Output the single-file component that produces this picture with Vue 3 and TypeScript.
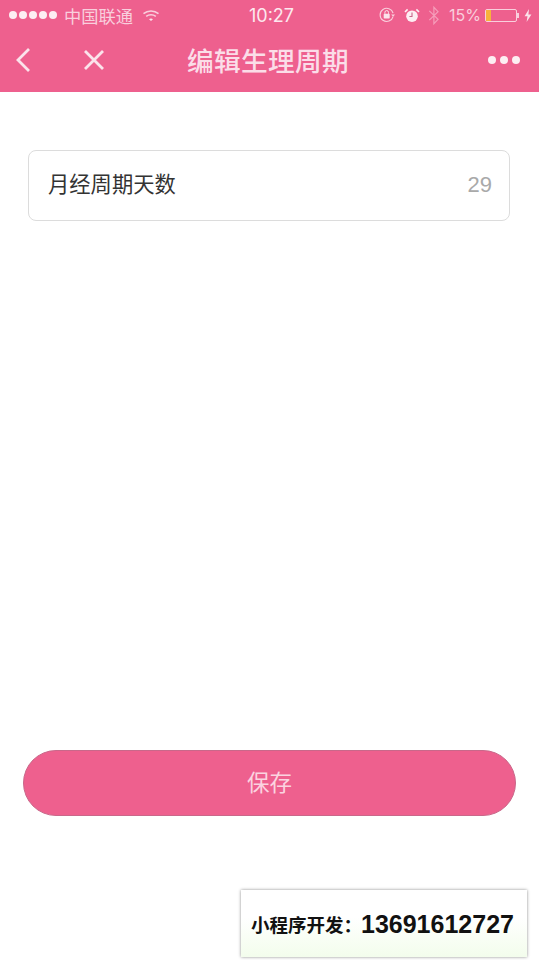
<script setup lang="ts">
const title: string = '编辑生理周期'
const dots: number[] = [1, 2, 3, 4, 5]
</script>

<template>
  <div class="page">
    <header class="header">
      <div class="status">
        <div class="status-left">
          <div class="signal"><span v-for="d in dots" :key="d" class="sig-dot"></span></div>
          <span class="carrier">中国联通</span>
          <svg class="wifi" width="18" height="13" viewBox="0 0 18 13" fill="none">
            <path d="M1.5 4.6C5.8 1 12.2 1 16.5 4.6" stroke="#f9cfdd" stroke-width="1.5" />
            <path d="M4.2 7.4C6.9 5.2 11.1 5.2 13.8 7.4" stroke="#f9cfdd" stroke-width="1.5" />
            <path d="M7 10.2 9 12l2-1.8C9.8 9.2 8.2 9.2 7 10.2Z" fill="#fbe3eb" />
          </svg>
        </div>
        <span class="time">10:27</span>
        <div class="status-right">
          <svg class="lock" width="18" height="16" viewBox="0 0 17 16" fill="none">
            <path d="M14.6 9.6A6.6 6.6 0 1 1 14.6 6.2" stroke="#f9cfdd" stroke-width="1.1" />
            <path d="M12.6 7.4h4l-2 2.4Z" fill="#f9cfdd" />
            <rect x="5.2" y="6.8" width="6" height="4.6" rx=".6" fill="#fbe3eb" />
            <path d="M6.4 6.8V5.4a1.8 1.8 0 0 1 3.6 0v1.4" stroke="#fbe3eb" stroke-width="1" />
          </svg>
          <svg class="alarm" width="16" height="15" viewBox="0 0 16 15" fill="none">
            <circle cx="8" cy="8.2" r="5.8" fill="#fdeef3" />
            <path d="M8 4.6v3.9H5.4" stroke="#c9658a" stroke-width="1.1" />
            <path d="M1 4 3.6 1.4M15 4 12.4 1.4" stroke="#fdeef3" stroke-width="1.6" />
          </svg>
          <svg class="bt" width="12" height="21" viewBox="0 0 11 19" fill="none">
            <path d="M1.2 5.2 9.2 13 5.4 17V2l3.8 4-8 7.8" stroke="#f59dba" stroke-width="1.1" />
          </svg>
          <span class="percent">15%</span>
          <div class="battery">
            <div class="battery-body"><span class="battery-level"></span></div>
            <span class="battery-tip"></span>
          </div>
          <svg class="bolt" width="8" height="13" viewBox="0 0 8 13">
            <path d="M5 0 .6 7.2h2.9L2.6 13 7.4 5.4H4.4Z" fill="#fbe3eb" />
          </svg>
        </div>
      </div>
      <nav class="nav">
        <div class="nav-left">
          <svg class="back" width="16" height="26" viewBox="0 0 16 26" fill="none">
            <path d="M14 2 3 13l11 11" stroke="#fbe3eb" stroke-width="2.8" />
          </svg>
          <svg class="close" width="24" height="24" viewBox="0 0 24 24" fill="none">
            <path d="M3 3l18 18M21 3 3 21" stroke="#fbe3eb" stroke-width="2.8" />
          </svg>
        </div>
        <h1 class="title">{{ title }}</h1>
        <div class="more"><span></span><span></span><span></span></div>
      </nav>
    </header>

    <main class="main">
      <div class="card">
        <span class="label">月经周期天数</span>
        <span class="value">29</span>
      </div>
      <button class="save" type="button">保存</button>
    </main>

    <aside class="promo">
      <span class="promo-label">小程序开发：</span><span class="promo-phone">13691612727</span>
    </aside>
  </div>
</template>

<style scoped>
.page {
  position: relative;
  width: 539px;
  height: 960px;
  display: flex;
  flex-direction: column;
  overflow: hidden;
  background: #fff;
  font-family: "Liberation Sans", "Noto Sans CJK SC", sans-serif;
}
.header {
  height: 92px;
  flex: none;
  background: #ee608e;
  display: flex;
  flex-direction: column;
}
.status {
  height: 30px;
  display: grid;
  grid-template-columns: 1fr auto 1fr;
  align-items: center;
  padding: 0 7px 0 9px;
  color: #fbdce7;
  font-size: 16px;
}
.status-left,
.status-right {
  display: flex;
  align-items: center;
}
.status-right {
  justify-content: flex-end;
}
.signal {
  display: flex;
  gap: 2px;
}
.sig-dot {
  width: 8px;
  height: 8px;
  border-radius: 50%;
  background: #fdeef3;
}
.carrier {
  margin-left: 7px;
  color: #f9cfdd;
  font-size: 17.25px;
}
.wifi {
  margin-left: 9px;
}
.time {
  font-family: "Inter", "Liberation Sans", sans-serif;
  font-size: 18px;
  color: #fde8ef;
  padding-left: 2px;
}
.alarm {
  margin-left: 8px;
}
.bt {
  margin-left: 8px;
}
.percent {
  margin-left: 9px;
  font-family: "Inter", "Liberation Sans", sans-serif;
  font-size: 16px;
  color: #f9cfdd;
}
.battery {
  margin-left: 4px;
  display: flex;
  align-items: center;
}
.battery-body {
  width: 32px;
  height: 13px;
  box-sizing: border-box;
  border: 1px solid #f9cfdd;
  border-radius: 2px;
  display: flex;
}
.battery-level {
  width: 5px;
  background: #f7b23c;
}
.battery-tip {
  width: 2px;
  height: 5px;
  background: #f9cfdd;
}
.bolt {
  margin-left: 5px;
}
.nav {
  position: relative;
  flex: 1;
  display: flex;
  align-items: center;
  justify-content: space-between;
  padding: 0 19px 2px 15px;
}
.nav-left {
  display: flex;
  align-items: center;
  gap: 51px;
}
.title {
  position: absolute;
  left: 0;
  right: 3px;
  bottom: 12px;
  margin: 0;
  text-align: center;
  font-size: 26.7px;
  line-height: 36px;
  font-weight: 500;
  color: #fbdde8;
  letter-spacing: 0.3px;
}
.more {
  display: flex;
  gap: 4px;
}
.more span {
  width: 8px;
  height: 8px;
  border-radius: 50%;
  background: #fdeef3;
}
.main {
  flex: 1;
  display: flex;
  flex-direction: column;
  justify-content: space-between;
  padding: 58px 23px 144px;
}
.card {
  height: 71px;
  box-sizing: border-box;
  margin: 0 6px 0 5px;
  display: flex;
  align-items: center;
  justify-content: space-between;
  padding: 0 17px 6px 19px;
  border: 1.5px solid #dcdcdc;
  border-radius: 8px;
}
.label {
  font-size: 21.3px;
  color: #333;
}
.value {
  font-size: 22px;
  color: #a9a9a9;
  padding-top: 5px;
}
.save {
  height: 66px;
  border: 1px solid #c9688a;
  border-radius: 33px;
  background: #ee608e;
  color: #fbd3e0;
  font-family: inherit;
  font-size: 22.5px;
  padding: 0 0 5px;
}
.promo {
  position: absolute;
  left: 241px;
  top: 890px;
  width: 286px;
  height: 67px;
  box-sizing: border-box;
  display: flex;
  align-items: center;
  padding-left: 10px;
  background: linear-gradient(#ffffff 40%, #f3fdec);
  box-shadow: 0 0 3px rgba(0, 0, 0, 0.45);
  color: #111;
  font-weight: 700;
  white-space: nowrap;
}
.promo-label {
  font-size: 18.5px;
  width: 110px;
  flex: none;
}
.promo-phone {
  font-size: 25px;
  padding-top: 2px;
}
</style>
